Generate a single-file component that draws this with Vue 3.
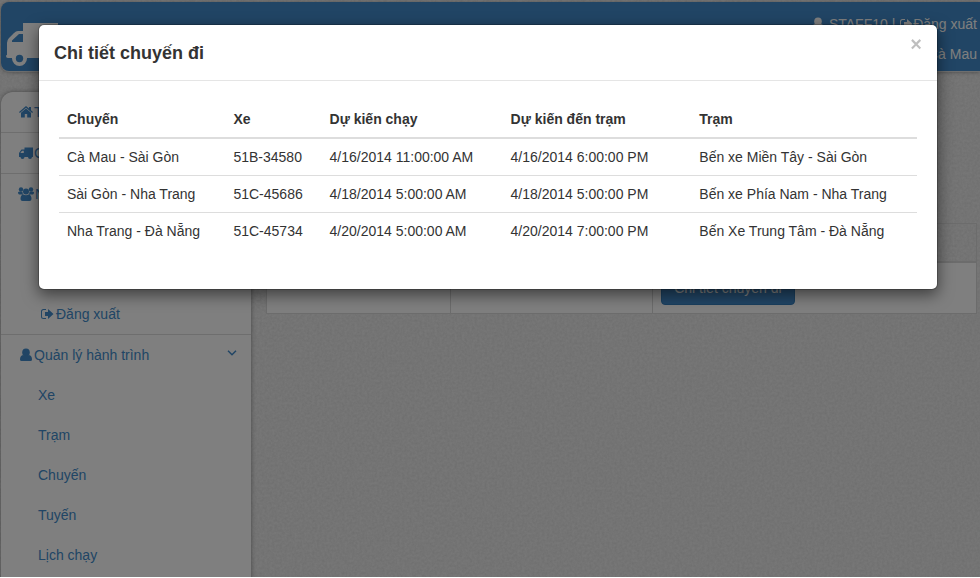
<script setup>
import { ref } from 'vue'

const trips = [
  ['Cà Mau - Sài Gòn', '51B-34580', '4/16/2014 11:00:00 AM', '4/16/2014 6:00:00 PM', 'Bến xe Miền Tây - Sài Gòn'],
  ['Sài Gòn - Nha Trang', '51C-45686', '4/18/2014 5:00:00 AM', '4/18/2014 5:00:00 PM', 'Bến xe Phía Nam - Nha Trang'],
  ['Nha Trang - Đà Nẵng', '51C-45734', '4/20/2014 5:00:00 AM', '4/20/2014 7:00:00 PM', 'Bến Xe Trung Tâm - Đà Nẵng'],
]
const columns = ['Chuyến', 'Xe', 'Dự kiến chạy', 'Dự kiến đến trạm', 'Trạm']
const routeLinks = ['Xe', 'Trạm', 'Chuyến', 'Tuyến', 'Lịch chạy']
const open = ref(true)
</script>

<template>
  <div class="page">
    <svg class="texture" aria-hidden="true">
      <filter id="grain" x="0" y="0" width="100%" height="100%">
        <feTurbulence type="fractalNoise" baseFrequency="0.4" numOctaves="3" seed="4" />
        <feColorMatrix values="0 0 0 0 0  0 0 0 0 0  0 0 0 0 0  0.1 0 0 0 -0.02" />
      </filter>
      <rect width="100%" height="100%" filter="url(#grain)" />
    </svg>

    <header class="banner">
      <svg class="logo" viewBox="0 0 58 46" aria-hidden="true">
        <path fill="currentColor" fill-rule="evenodd" d="M17 1h35v35H2Q0 36 0 34q0-1 1-1V21q0-3 2-5l5-5q2-2 4-2h5zM17 12h-4l-7 6.500V20h11z" />
        <circle cx="13.500" cy="36.500" r="7.500" fill="currentColor" />
        <circle class="hub" cx="13.500" cy="36.500" r="3.700" />
      </svg>
      <div class="account">
        <p>
          <svg class="icon" viewBox="0 0 14 14" aria-hidden="true"><ellipse cx="7" cy="4.500" rx="3.800" ry="4" /><path d="M4 7q3 2 6 0 3 .5 3 4.500Q13 13 11.500 13h-9Q1 13 1 11.500 1 7.500 4 7z" /></svg>
          STAFF10 |
          <a href="#logout"><svg class="icon" viewBox="0 0 14 14" aria-hidden="true"><path d="M6 2H3.500Q1 2 1 4.500v5Q1 12 3.500 12H6v-1H3.500Q2 11 2 9.500v-5Q2 3 3.500 3H6z" /><path d="M8 2v3H5v4h3v3l5.500-5z" /></svg>Đăng xuất</a>
        </p>
        <p>Cà Mau</p>
      </div>
    </header>

    <div class="columns">
      <nav class="sidebar">
        <a class="entry" href="#home"><svg class="icon" viewBox="0 0 14 14" aria-hidden="true"><path d="M7 1 0 7l.8.9L7 2.700l6.200 5.200.8-.9-2-1.700V2h-2v1.600z" /><path d="M7 3.500 2 7.700v4.800h3.800V9h2.400v3.500H12V7.700z" /></svg>Trang chủ</a>
        <a class="entry" href="#trips"><svg class="icon" viewBox="0 0 14 14" aria-hidden="true"><path fill-rule="evenodd" d="M5.500 1.500H14V11h-1a2 2 0 0 1-4 0H5.500a2 2 0 0 1-4 0H0V7l2.500-3.500h3zM4.800 4.700H3L1.300 7h3.500z" /></svg>Chuyến</a>
        <section class="group staff">
          <a class="entry" href="#staff"><svg class="icon wide" viewBox="0 0 16 14" aria-hidden="true"><circle cx="3" cy="2.500" r="2.200" /><circle cx="13" cy="2.500" r="2.200" /><circle cx="8" cy="4.500" r="3" /><path d="M0 5q2-1 4.500 0 0 2 1 2.500H1Q0 7 0 5zM16 5q-2-1-4.500 0 0 2-1 2.500H15q1-.5 1-2.500zM5 7.500q3 1.500 6 0 2.500.5 2.500 4.500 0 2-2 2h-7q-2 0-2-2 0-4 2.500-4.500z" /></svg>Nhân viên</a>
          <a class="child" href="#logout"><svg class="icon" viewBox="0 0 14 14" aria-hidden="true"><path d="M6 2H3.500Q1 2 1 4.500v5Q1 12 3.500 12H6v-1H3.500Q2 11 2 9.500v-5Q2 3 3.500 3H6z" /><path d="M8 2v3H5v4h3v3l5.500-5z" /></svg>Đăng xuất</a>
        </section>
        <section class="group">
          <a class="entry" href="#routes">
            <svg class="icon" viewBox="0 0 14 14" aria-hidden="true"><ellipse cx="7" cy="4.500" rx="3.800" ry="4" /><path d="M4 7q3 2 6 0 3 .5 3 4.500Q13 13 11.500 13h-9Q1 13 1 11.500 1 7.500 4 7z" /></svg>Quản lý hành trình
            <svg class="chevron" viewBox="0 0 10 6" aria-hidden="true"><path d="M1 .8 5 4.800 9 .8" /></svg>
          </a>
          <a v-for="link in routeLinks" :key="link" class="child" href="#routes">{{ link }}</a>
        </section>
      </nav>

      <main class="content">
        <table class="listing">
          <thead>
            <tr><th class="first"></th><th class="second"></th><th></th></tr>
          </thead>
          <tbody>
            <tr>
              <td></td>
              <td></td>
              <td><button class="primary" type="button" @click="open = true">Chi tiết chuyến đi</button></td>
            </tr>
          </tbody>
        </table>
      </main>
    </div>

    <div v-if="open" class="backdrop">
      <div class="dialog" role="dialog" aria-modal="true" aria-labelledby="dialog-title">
        <div class="dialog-head">
          <h4 id="dialog-title">Chi tiết chuyến đi</h4>
          <button class="close" type="button" aria-label="Đóng" @click="open = false">×</button>
        </div>
        <div class="dialog-body">
          <table class="trips">
            <colgroup>
              <col class="route" /><col class="vehicle" /><col class="departure" /><col class="arrival" /><col />
            </colgroup>
            <thead>
              <tr><th v-for="column in columns" :key="column" scope="col">{{ column }}</th></tr>
            </thead>
            <tbody>
              <tr v-for="trip in trips" :key="trip[0]">
                <td v-for="value in trip" :key="value">{{ value }}</td>
              </tr>
            </tbody>
          </table>
        </div>
      </div>
    </div>
  </div>
</template>

<style>
body {
  margin: 0;
  overflow: hidden;
}
</style>

<style scoped>
* {
  box-sizing: border-box;
}

.page {
  position: relative;
  height: calc(100vh - 1px);
  overflow: hidden;
  padding: 2px 0 0 1px;
  background: #efefef;
  color: #333;
  font: 14px/20px "Liberation Sans", Arial, sans-serif;
}

.texture {
  position: absolute;
  inset: 0;
  width: 100%;
  height: 100%;
}

a {
  color: #428bca;
  text-decoration: none;
}

.icon {
  width: 14px;
  height: 14px;
  margin-right: 1px;
  vertical-align: -2px;
  fill: currentColor;
}

.wide {
  width: 16px;
  margin-left: -1px;
}

.banner {
  position: relative;
  display: flex;
  justify-content: space-between;
  height: 69px;
  padding: 7px 3px 0 5px;
  border-radius: 8px 0 0 8px;
  background: #428bca;
  box-shadow: 0 1px 0 #ddd, 0 1px 4px rgba(0, 0, 0, 0.4);
  color: #fff;
}

.banner a {
  color: #fff;
}

.banner .icon {
  margin-right: 0;
}

.logo {
  width: 58px;
  height: 46px;
  margin-top: 13px;
}

.hub {
  fill: #428bca;
}

.account {
  text-align: right;
}

.account p {
  margin: 5px 0 10px;
}

.columns {
  position: relative;
  display: flex;
  gap: 15px;
  margin-top: 21px;
  padding-right: 3px;
}

.sidebar {
  flex: 0 0 250px;
  height: 100vh;
  border-radius: 12px 12px 0 0;
  background: #fff;
  box-shadow: 0 0 5px rgba(0, 0, 0, 0.4);
}

.entry,
.child {
  display: block;
  padding: 10px 14px 10px 18px;
}

.sidebar > .entry {
  border-bottom: 1px solid #ddd;
}

.child {
  padding-left: 37px;
}

.child .icon {
  margin-right: 2px;
  margin-left: 2px;
}

.staff {
  display: flex;
  flex-direction: column;
  height: 161px;
  justify-content: space-between;
  border-bottom: 1px solid #ddd;
}

.chevron {
  float: right;
  width: 10px;
  height: 6px;
  margin-top: 5px;
  fill: none;
  stroke: currentColor;
  stroke-width: 1.500;
}

.content {
  flex: 1;
  padding-top: 131px;
}

.listing {
  width: 100%;
  border-collapse: collapse;
  table-layout: fixed;
}

.listing th,
.listing td {
  padding: 8px;
  border: 1px solid #d8d8d8;
}

.listing th {
  height: 38px;
  border-bottom-width: 2px;
}

.listing td {
  background: #fff;
}

.first {
  width: 25.9%;
}

.second {
  width: 28.5%;
}

.primary {
  display: block;
  height: 34px;
  padding: 0 12px;
  border: 1px solid #357ebd;
  border-radius: 4px;
  background: #428bca;
  color: #fff;
  font: inherit;
}

.backdrop {
  position: absolute;
  inset: 0;
  padding: 24px 42px 0 38px;
  background: rgba(0, 0, 0, 0.5);
}

.dialog {
  border: 1px solid rgba(0, 0, 0, 0.2);
  border-radius: 6px;
  background: #fff;
  background-clip: padding-box;
  box-shadow: 0 5px 15px rgba(0, 0, 0, 0.5);
}

.dialog-head {
  display: flex;
  justify-content: space-between;
  align-items: flex-start;
  padding: 15px 15px 13px;
  border-bottom: 1px solid #e5e5e5;
}

h4 {
  margin: 0;
  font-size: 18px;
  line-height: 27px;
}

.close {
  padding: 0;
  border: 0;
  background: none;
  color: #000;
  opacity: 0.25;
  font: bold 20px/8px "Liberation Sans", Arial, sans-serif;
}

.dialog-body {
  padding: 20px;
}

.trips {
  width: 100%;
  margin-bottom: 20px;
  border-collapse: collapse;
  table-layout: fixed;
}

.route {
  width: 19.4%;
}

.vehicle {
  width: 11.2%;
}

.departure {
  width: 21.1%;
}

.arrival {
  width: 22%;
}

.trips th,
.trips td {
  padding: 8px;
  text-align: left;
  white-space: nowrap;
}

.trips td {
  border-top: 1px solid #ddd;
}

.trips th {
  border-bottom: 2px solid #ddd;
}
</style>
